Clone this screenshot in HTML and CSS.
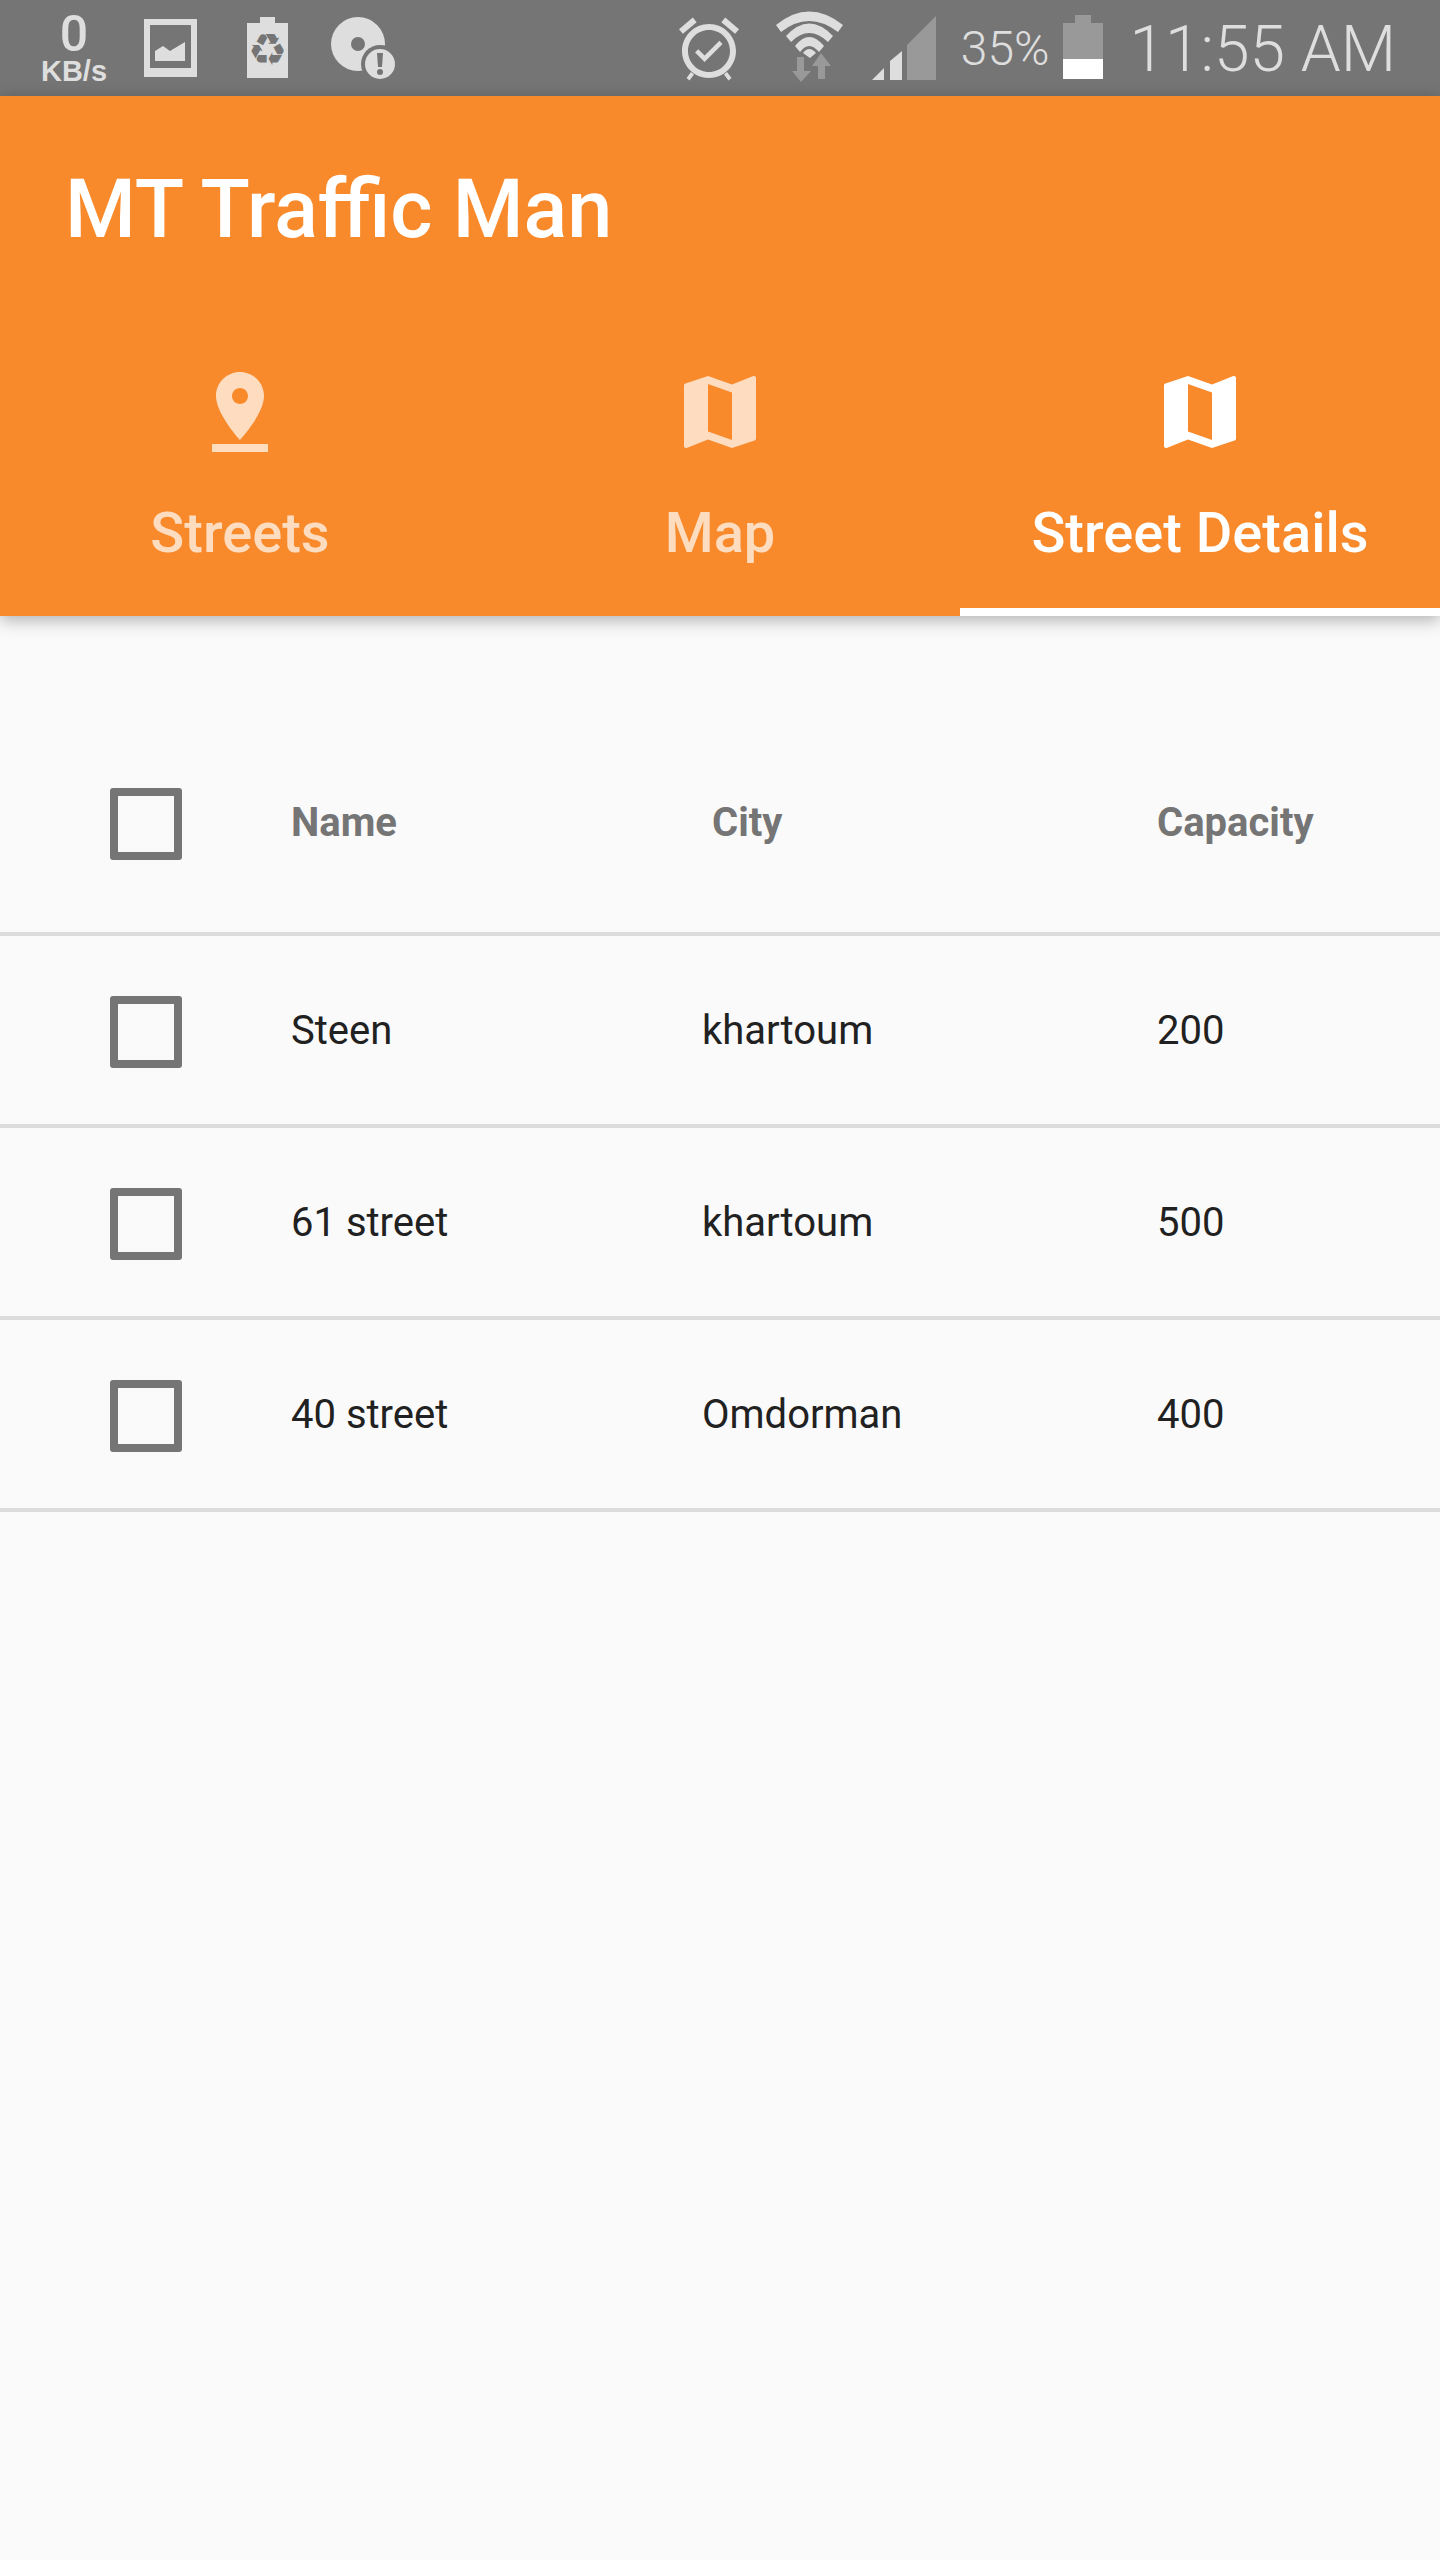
FILE: index.html
```html
<!DOCTYPE html>
<html lang="en">
<head>
    <meta charset="UTF-8">
    <meta name="viewport" content="width=device-width, initial-scale=1.0">
    <title>MT Traffic Man</title>
    <link rel="stylesheet" href="styles.css">
</head>
<body>
<div class="status-bar">
    <div class="net-speed">
        <span class="net-value">0</span>
        <span class="net-unit">KB/s</span>
    </div>
    <svg class="icon-image" width="53" height="96" viewBox="0 0 53 96">
        <path class="light" fill-rule="evenodd" d="M0 19h53v58H0zM6 25v43h41V25z"/>
        <path class="light" d="M11 61V51l8-5 7 5 15-9v19z"/>
    </svg>
    <svg class="icon-recycle" width="41" height="96" viewBox="0 0 41 96">
        <path class="light" d="M13 17h15v6h13v55H0V23h13z"/>
        <text class="recycle-glyph" x="20.5" y="65" text-anchor="middle">♻</text>
    </svg>
    <svg class="icon-disc" width="70" height="96" viewBox="0 0 70 96">
        <path class="light" fill-rule="evenodd" d="M27 17a27 27 0 1 1 0 54a27 27 0 1 1 0-54zM27 37a7 7 0 1 0 0 14a7 7 0 1 0 0-14z"/>
        <circle class="bar" cx="49" cy="64" r="19"/>
        <circle class="light" cx="49" cy="64" r="15"/>
        <path class="bar" d="M46 53h6l-1 14h-4z"/>
        <circle class="bar" cx="49" cy="72" r="3"/>
    </svg>
    <div class="status-spacer"></div>
    <svg class="icon-alarm" width="72" height="96" viewBox="0 0 24 32">
        <path class="light" d="M22 9.720l-4.600-3.860-1.290 1.530 4.600 3.860L22 9.720zM7.880 7.390L6.600 5.860 2 9.710l1.290 1.530 4.590-3.850zM12 8c-4.970 0-9 4.030-9 9s4.020 9 9 9c4.970 0 9-4.030 9-9s-4.030-9-9-9zm0 16c-3.870 0-7-3.130-7-7s3.130-7 7-7 7 3.130 7 7-3.130 7-7 7zm-1.460-5.470L8.410 16.400l-1.060 1.060 3.180 3.180 6-6-1.060-1.060-4.930 4.950z"/>
        <path class="light" d="M6 24l-1.500 2 1 .8 1.500-2zM18 24l1.500 2-1 .8-1.500-2z"/>
    </svg>
    <svg class="icon-wifi" width="67" height="96" viewBox="0 0 67 96">
        <path class="light" d="M0 25Q33-2 67 25l-5 7Q33 10 5 32z"/>
        <path class="light" d="M10 36Q33 11 57 36l-5 6Q33 24 15 42z"/>
        <path class="light" d="M19 46Q33 28 48 46l-5 6Q33 40 24 52z"/>
        <path class="light" d="M27 53Q33 45 40 53l-6 5z"/>
        <path class="dim" d="M21 57h7v14h7L25 82 16 71h5z"/>
        <path class="dim" d="M45 53l10 13h-6v13h-7V66h-6z"/>
    </svg>
    <svg class="icon-signal" width="64" height="96" viewBox="0 0 64 96">
        <path class="light" d="M0 80l12-12v12zM18 80V61l12-10v29z"/>
        <path class="dim" d="M35 80V45l29-29v64z"/>
    </svg>
    <span class="battery-text">35%</span>
    <div class="battery">
        <div class="battery-cap"></div>
        <div class="battery-body">
            <div class="battery-level"></div>
        </div>
    </div>
    <span class="clock">11:55 AM</span>
</div>
<header class="app-bar">
    <div class="app-title">MT Traffic Man</div>
    <nav class="tabs">
        <div class="tab">
            <svg class="tab-icon" width="96" height="96" viewBox="0 0 24 24">
                <path d="M18 8c0-3.310-2.690-6-6-6S6 4.690 6 8c0 4.500 6 11 6 11s6-6.500 6-11zm-8 0c0-1.100.9-2 2-2s2 .9 2 2-.89 2-2 2c-1.100 0-2-.9-2-2zM5 20v2h14v-2H5z"/>
            </svg>
            <span>Streets</span>
        </div>
        <div class="tab">
            <svg class="tab-icon" width="96" height="96" viewBox="0 0 24 24">
                <path d="M20.500 3l-.16.03L15 5.100 9 3 3.360 4.900c-.21.07-.36.25-.36.48V20.500c0 .28.22.5.5.5l.16-.03L9 18.900l6 2.100 5.640-1.900c.21-.07.36-.25.36-.48V3.500c0-.28-.22-.5-.5-.5zM15 19l-6-2.110V5l6 2.110V19z"/>
            </svg>
            <span>Map</span>
        </div>
        <div class="tab tab-active">
            <svg class="tab-icon" width="96" height="96" viewBox="0 0 24 24">
                <path d="M20.500 3l-.16.03L15 5.100 9 3 3.360 4.900c-.21.07-.36.25-.36.48V20.500c0 .28.22.5.5.5l.16-.03L9 18.900l6 2.100 5.640-1.900c.21-.07.36-.25.36-.48V3.500c0-.28-.22-.5-.5-.5zM15 19l-6-2.110V5l6 2.110V19z"/>
            </svg>
            <span>Street Details</span>
        </div>
    </nav>
</header>
<main class="streets">
    <div class="row row-head">
        <div class="checkbox"></div>
        <div>Name</div>
        <div class="head-city">City</div>
        <div>Capacity</div>
    </div>
    <div class="row">
        <div class="checkbox"></div>
        <div>Steen</div>
        <div>khartoum</div>
        <div>200</div>
    </div>
    <div class="row">
        <div class="checkbox"></div>
        <div>61 street</div>
        <div>khartoum</div>
        <div>500</div>
    </div>
    <div class="row">
        <div class="checkbox"></div>
        <div>40 street</div>
        <div>Omdorman</div>
        <div>400</div>
    </div>
</main>
</body>
</html>
```

FILE: styles.css
```css
body {
    margin: 0;
    min-height: 2560px;
    background: #fafafa;
    font-family: Roboto, "Liberation Sans", sans-serif;
    color: #212121;
}

svg {
    display: block;
    flex: none;
}

.light {
    fill: #dedede;
}

.dim {
    fill: #999;
}

.bar {
    fill: #757575;
}

.status-bar {
    display: flex;
    height: 96px;
    padding-right: 44px;
    background: #757575;
    color: #dedede;
}

.status-spacer {
    flex: 1;
}

.net-speed {
    display: flex;
    flex-direction: column;
    align-items: center;
    width: 68px;
    margin-left: 40px;
    padding-top: 9px;
    font-family: "Liberation Sans", sans-serif;
}

.net-value {
    font-family: Roboto, sans-serif;
    font-size: 50px;
    font-weight: 500;
    line-height: 50px;
}

.net-unit {
    font-size: 29px;
    font-weight: bold;
    line-height: 24px;
}

.icon-image {
    margin-left: 36px;
}

.icon-recycle {
    margin-left: 50px;
}

.recycle-glyph {
    font-family: "DejaVu Sans", sans-serif;
    font-size: 44px;
    fill: #757575;
}

.icon-disc {
    margin-left: 43px;
}

.icon-wifi {
    margin-left: 31px;
}

.icon-signal {
    margin-left: 29px;
}

.battery-text {
    margin-left: 25px;
    font-size: 48px;
    font-weight: 300;
    line-height: 98px;
}

.battery {
    display: flex;
    flex-direction: column;
    align-items: center;
    width: 40px;
    margin-left: 13px;
    padding-top: 15px;
}

.battery-cap {
    width: 16px;
    height: 8px;
    background: #999;
}

.battery-body {
    display: flex;
    flex-direction: column;
    justify-content: flex-end;
    width: 40px;
    height: 56px;
    background: #999;
}

.battery-level {
    height: 20px;
    background: white;
}

.clock {
    margin-left: 27px;
    font-size: 64px;
    font-weight: 300;
    line-height: 100px;
}

.app-bar {
    position: relative;
    height: 520px;
    background: #f88a2b;
    color: white;
    box-shadow: 0 4px 16px rgba(0, 0, 0, 0.3);
}

.app-title {
    height: 224px;
    padding-left: 65px;
    font-size: 81px;
    font-weight: 500;
    line-height: 228px;
}

.tabs {
    display: grid;
    grid-template-columns: repeat(3, 1fr);
    height: 296px;
}

.tab {
    display: flex;
    flex-direction: column;
    align-items: center;
    padding-top: 44px;
    box-sizing: border-box;
    font-size: 56px;
    font-weight: 500;
    line-height: 66px;
    color: rgba(255, 255, 255, 0.7);
}

.tab-icon {
    margin-bottom: 40px;
    fill: currentColor;
}

.tab-active {
    color: white;
    border-bottom: 8px solid white;
}

.streets {
    padding-top: 96px;
}

.row {
    display: grid;
    grid-template-columns: 181px 411px 455px 1fr;
    align-items: center;
    height: 188px;
    padding-left: 110px;
    border-bottom: 4px solid #dcdcdc;
    font-size: 40px;
}

.row-head {
    height: 220px;
    font-weight: bold;
    color: #757575;
}

.head-city {
    padding-left: 10px;
}

.checkbox {
    width: 56px;
    height: 56px;
    margin-top: 4px;
    border: 8px solid #757575;
    border-radius: 3px;
}
```
